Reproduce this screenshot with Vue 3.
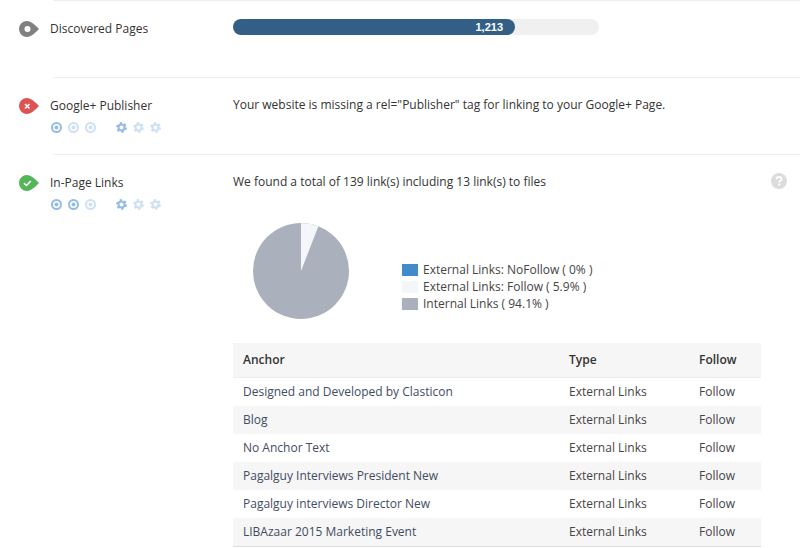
<script setup>
const rows = [
  'Designed and Developed by Clasticon',
  'Blog',
  'No Anchor Text',
  'Pagalguy Interviews President New',
  'Pagalguy interviews Director New',
  'LIBAzaar 2015 Marketing Event'
]
const legend = [
  { c: '#428bca', t: 'External Links: NoFollow ( 0% )' },
  { c: '#f4f6f9', t: 'External Links: Follow ( 5.9% )' },
  { c: '#aab1bc', t: 'Internal Links ( 94.1% )' }
]
const ratings = [
  { targets: [1, 0.45, 0.45], gears: [1, 0.45, 0.45] },
  { targets: [1, 1, 0.45], gears: [1, 0.45, 0.45] }
]
</script>

<template>
  <div class="page">
    <div class="rule"></div>
    <section class="row first">
      <div class="side">
        <div class="head">
          <svg class="marker" width="20" height="16" viewBox="0 0 20 16">
            <path d="M8 0C12 0 16 4 20 8C16 12 12 16 8 16A8 8 0 0 1 8 0Z" fill="#808080" />
            <circle cx="8.5" cy="8" r="3" fill="#fff" />
          </svg>
          <span class="label">Discovered Pages</span>
        </div>
      </div>
      <div class="main">
        <div class="track"><div class="fill">1,213</div></div>
      </div>
    </section>

    <div class="rule"></div>
    <section class="row">
      <div class="side">
        <div class="head">
          <svg class="marker" width="20" height="16" viewBox="0 0 20 16">
            <path d="M8 0C12 0 16 4 20 8C16 12 12 16 8 16A8 8 0 0 1 8 0Z" fill="#df5252" />
            <path d="M6 6L10.5 10.5M10.5 6L6 10.5" stroke="#fff" stroke-width="1.6" fill="none" />
          </svg>
          <span class="label">Google+ Publisher</span>
        </div>
        <div class="rating">
          <div class="set">
            <svg v-for="(o, i) in ratings[0].targets" :key="i" width="11" height="11" viewBox="0 0 11 11" :style="{ opacity: o }">
              <circle cx="5.5" cy="5.5" r="4.5" fill="none" stroke="#94bce4" stroke-width="2" />
              <circle cx="5.5" cy="5.5" r="2" fill="#94bce4" />
            </svg>
          </div>
          <div class="set gears">
            <svg v-for="(o, i) in ratings[0].gears" :key="i" width="11" height="11" viewBox="0 0 11 11" :style="{ opacity: o }">
              <circle cx="5.5" cy="5.5" r="4.4" fill="none" stroke="#94bce4" stroke-width="2" stroke-dasharray="2.3 2.3" />
              <circle cx="5.5" cy="5.5" r="3" fill="none" stroke="#94bce4" stroke-width="2" />
            </svg>
          </div>
        </div>
      </div>
      <div class="main">
        <p class="text">Your website is missing a rel="Publisher" tag for linking to your Google+ Page.</p>
      </div>
    </section>

    <div class="rule"></div>
    <section class="row">
      <div class="side">
        <div class="head">
          <svg class="marker" width="20" height="16" viewBox="0 0 20 16">
            <path d="M8 0C12 0 16 4 20 8C16 12 12 16 8 16A8 8 0 0 1 8 0Z" fill="#55b559" />
            <path d="M5 8.2L7.5 10.5L11.8 6" stroke="#fff" stroke-width="1.6" fill="none" />
          </svg>
          <span class="label">In-Page Links</span>
        </div>
        <div class="rating">
          <div class="set">
            <svg v-for="(o, i) in ratings[1].targets" :key="i" width="11" height="11" viewBox="0 0 11 11" :style="{ opacity: o }">
              <circle cx="5.5" cy="5.5" r="4.5" fill="none" stroke="#94bce4" stroke-width="2" />
              <circle cx="5.5" cy="5.5" r="2" fill="#94bce4" />
            </svg>
          </div>
          <div class="set gears">
            <svg v-for="(o, i) in ratings[1].gears" :key="i" width="11" height="11" viewBox="0 0 11 11" :style="{ opacity: o }">
              <circle cx="5.5" cy="5.5" r="4.4" fill="none" stroke="#94bce4" stroke-width="2" stroke-dasharray="2.3 2.3" />
              <circle cx="5.5" cy="5.5" r="3" fill="none" stroke="#94bce4" stroke-width="2" />
            </svg>
          </div>
        </div>
      </div>
      <div class="main">
        <div class="title-line">
          <p class="text">We found a total of 139 link(s) including 13 link(s) to files</p>
          <svg class="help" width="16" height="16" viewBox="0 0 16 16">
            <circle cx="8" cy="8" r="8" fill="#dcdcdc" />
            <path d="M5.6 6.2C5.6 4.8 6.7 4 8 4C9.4 4 10.5 4.8 10.5 6.1C10.5 7.7 8.3 7.8 8.3 9.4" fill="none" stroke="#fff" stroke-width="1.8" />
            <rect x="7.3" y="10.5" width="2" height="2" fill="#fff" />
          </svg>
        </div>
        <div class="chart">
          <svg width="96" height="96" viewBox="0 0 96 96">
            <circle cx="48" cy="48" r="48" fill="#aab1bc" />
            <path d="M48 48L48 0A48 48 0 0 1 65.4 3.3Z" fill="#f4f6f9" />
          </svg>
          <ul class="legend">
            <li v-for="l in legend" :key="l.t">
              <i :style="{ background: l.c }"></i>{{ l.t }}
            </li>
          </ul>
        </div>
        <table class="links">
          <thead>
            <tr><th class="c1">Anchor</th><th class="c2">Type</th><th class="c3">Follow</th></tr>
          </thead>
          <tbody>
            <tr v-for="r in rows" :key="r">
              <td class="anchor">{{ r }}</td><td>External Links</td><td>Follow</td>
            </tr>
          </tbody>
        </table>
      </div>
    </section>
  </div>
</template>

<style>
html, body { margin: 0; background: #fff; overflow: hidden; }
</style>

<style scoped>
.page {
  width: 800px;
  height: 548px;
  overflow: hidden;
  font-family: "Open Sans", sans-serif;
  font-size: 12px;
  color: #333;
}
.rule { height: 1px; margin-left: 53px; background: #eeeeee; }
.row { display: flex; height: 76px; box-sizing: border-box; }
.row:last-child { height: auto; }
.side { width: 233px; flex: none; padding: 17px 0 0 19px; box-sizing: border-box; }
.head { display: flex; align-items: center; height: 20px; }
.marker { flex: none; margin-top: 2px; }
.label { margin-left: 11px; color: #333; }
.rating { display: flex; margin-top: 7px; margin-left: 32px; }
.set { display: flex; gap: 6px; }
.gears { margin-left: 20px; }
.main { width: 528px; flex: none; padding-top: 17px; }
.first .main { padding-top: 18px; }
.text { margin: 0; line-height: 20px; color: #333; }
.track { width: 366px; height: 16px; border-radius: 8px; background: #f0f0f0; }
.fill {
  width: 282px;
  height: 16px;
  box-sizing: border-box;
  padding-right: 12px;
  border-radius: 8px;
  background: #335f87;
  color: #fff;
  font: bold 11px/16px "Liberation Sans", Arial, sans-serif;
  text-align: right;
}
.title-line { display: flex; justify-content: space-between; position: relative; }
.help { position: absolute; right: -26px; top: 1px; }
.chart { display: flex; align-items: flex-end; margin: 31px 0 0 20px; }
.legend { list-style: none; margin: 0 0 7px 53px; padding: 0; color: #444; }
.legend li { display: flex; align-items: center; height: 17px; line-height: 17px; }
.legend i { width: 16px; height: 12px; margin-right: 5px; }
.links {
  width: 528px;
  margin-top: 24px;
  border-collapse: separate;
  border-spacing: 0;
  table-layout: fixed;
  border-bottom: 1px solid #ddd;
}
.links th, .links td { padding: 0 10px 2px; text-align: left; box-sizing: border-box; }
.links th {
  height: 35px;
  background: #f6f6f6;
  border-bottom: 1px solid #eee;
  font-weight: 600;
  color: #333;
}
.links td { height: 28px; color: #444; }
.links tbody tr:nth-child(even) td { background: #f6f6f6; }
.links .anchor { color: #3f4c63; }
.c1 { width: 326px; }
.c2 { width: 130px; }
.c3 { width: 72px; }
</style>
